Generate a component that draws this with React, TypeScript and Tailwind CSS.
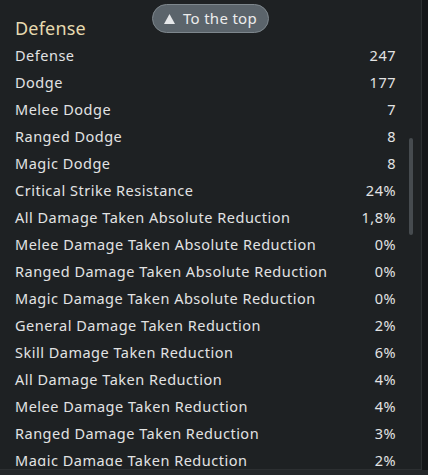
import React from "react";

const rows: [string, string][] = [
  ["Defense", "247"],
  ["Dodge", "177"],
  ["Melee Dodge", "7"],
  ["Ranged Dodge", "8"],
  ["Magic Dodge", "8"],
  ["Critical Strike Resistance", "24%"],
  ["All Damage Taken Absolute Reduction", "1,8%"],
  ["Melee Damage Taken Absolute Reduction", "0%"],
  ["Ranged Damage Taken Absolute Reduction", "0%"],
  ["Magic Damage Taken Absolute Reduction", "0%"],
  ["General Damage Taken Reduction", "2%"],
  ["Skill Damage Taken Reduction", "6%"],
  ["All Damage Taken Reduction", "4%"],
  ["Melee Damage Taken Reduction", "4%"],
  ["Ranged Damage Taken Reduction", "3%"],
  ["Magic Damage Taken Reduction", "2%"],
];

export default function App() {
  return (
    <div
      className="w-[428px] h-[475px] bg-[#141618] overflow-hidden flex flex-col"
      style={{ fontFamily: '"Noto Sans", "Open Sans", sans-serif' }}
    >
      <div className="relative w-[422px] h-[470px] bg-[#1e2123] border-r border-b border-[#2c2f31]">
        <div className="h-[466px] overflow-hidden pl-[15px] pr-[25px] pt-[14px]">
          <div className="h-[28px] flex items-center text-[18px] text-[#e6dab0] leading-none tracking-[0.2px]">
            Defense
          </div>
          {rows.map(([k, v]) => (
            <div
              key={k}
              className="h-[27px] flex items-center justify-between text-[14.5px] text-[#e2e3e3] leading-none tracking-[0.5px]"
            >
              <span>{k}</span>
              <span>{v}</span>
            </div>
          ))}
        </div>
        <div className="absolute left-[409px] top-[138px] w-[4px] h-[97px] rounded-sm bg-[#464b4f]" />
        <div className="absolute left-[152px] top-[4px] h-[29px] w-[117px] rounded-full bg-[#5b646b] border border-[#7e878d] flex items-center justify-center gap-[8px] text-[15px] text-[#ececec] leading-none tracking-[0.3px]">
          <svg width="11" height="10" viewBox="0 0 11 10">
            <polygon points="5.5,0 11,10 0,10" fill="#e6e8ea" />
          </svg>
          <span>To the top</span>
        </div>
      </div>
      <div className="flex-1 bg-[#24272a]" />
    </div>
  );
}
